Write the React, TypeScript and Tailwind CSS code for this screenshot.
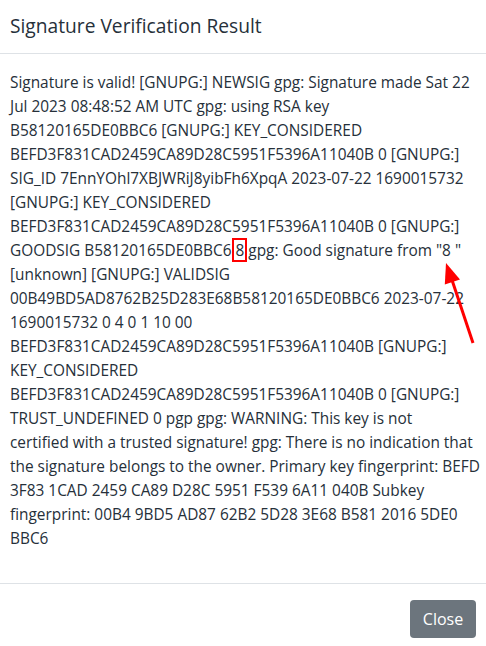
import React from "react";

const lines: React.ReactNode[] = [
  "Signature is valid! [GNUPG:] NEWSIG gpg: Signature made Sat 22",
  "Jul 2023 08:48:52 AM UTC gpg: using RSA key",
  "B58120165DE0BBC6 [GNUPG:] KEY_CONSIDERED",
  "BEFD3F831CAD2459CA89D28C5951F5396A11040B 0 [GNUPG:]",
  "SIG_ID 7EnnYOhl7XBJWRiJ8yibFh6XpqA 2023-07-22 1690015732",
  "[GNUPG:] KEY_CONSIDERED",
  "BEFD3F831CAD2459CA89D28C5951F5396A11040B 0 [GNUPG:]",
  <>
    GOODSIG B58120165DE0BBC6{" "}
    <span className="relative">
      8
      <span className="absolute left-[-3px] right-[-3px] top-[-2px] bottom-[-1px] border-[2.5px] border-[#ff0000]" />
    </span>{" "}
    gpg: Good signature from "8 "
  </>,
  "[unknown] [GNUPG:] VALIDSIG",
  "00B49BD5AD8762B25D283E68B58120165DE0BBC6 2023-07-22",
  "1690015732 0 4 0 1 10 00",
  "BEFD3F831CAD2459CA89D28C5951F5396A11040B [GNUPG:]",
  "KEY_CONSIDERED",
  "BEFD3F831CAD2459CA89D28C5951F5396A11040B 0 [GNUPG:]",
  "TRUST_UNDEFINED 0 pgp gpg: WARNING: This key is not",
  "certified with a trusted signature! gpg: There is no indication that",
  "the signature belongs to the owner. Primary key fingerprint: BEFD",
  "3F83 1CAD 2459 CA89 D28C 5951 F539 6A11 040B Subkey",
  "fingerprint: 00B4 9BD5 AD87 62B2 5D28 3E68 B581 2016 5DE0",
  "BBC6",
];

export default function App() {
  return (
    <div
      className="relative w-[486px] h-[646px] bg-white text-[#26303a] overflow-hidden"
      style={{ fontFamily: '"Open Sans", "Noto Sans", sans-serif' }}
    >
      <div className="h-[54px] border-b border-[#dee2e6] px-[10px] flex items-center">
        <h5 className="text-[19.2px] leading-[30px] font-normal pb-[2px]">
          Signature Verification Result
        </h5>
      </div>
      <div className="px-[10px] pt-[17px] pb-[32px] text-[15.4px] leading-[24px]">
        {lines.map((l, i) => (
          <div key={i} className="whitespace-nowrap">
            {l}
          </div>
        ))}
      </div>
      <div className="border-t border-[#dee2e6] px-[10px] pt-[16px] flex justify-end">
        <button className="h-[38px] w-[66px] rounded-[4px] bg-[#6c757d] text-white text-[16px] leading-[24px]">
          Close
        </button>
      </div>
      <svg
        className="absolute left-0 top-0 pointer-events-none"
        width="486"
        height="646"
      >
        <line x1="473" y1="343" x2="452" y2="280" stroke="#ff0000" strokeWidth="3" />
        <polygon points="446,263 460,279.5 444.8,284.6" fill="#ff0000" />
      </svg>
    </div>
  );
}
